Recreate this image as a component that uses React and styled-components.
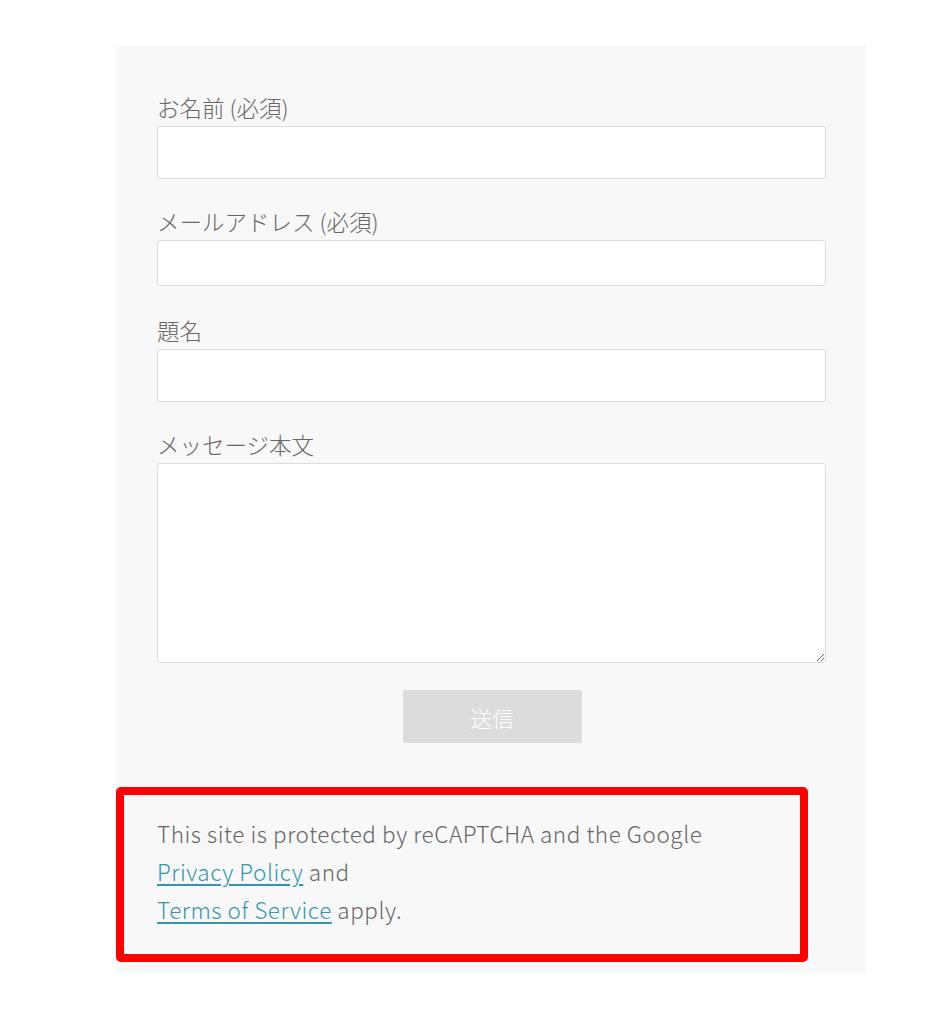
import React from "react";
import styled, { createGlobalStyle } from "styled-components";

const GlobalStyle = createGlobalStyle`
  body {
    margin: 0;
    background: #fff;
    font-family: "Noto Sans CJK JP", "Noto Sans", sans-serif;
  }
`;

const Page = styled.div`
  padding: 46px 0 40px 116px;
`;

const Panel = styled.div`
  width: 750px;
  background: #f8f8f8;
  padding: 46px 0 11px 0;
  box-sizing: border-box;
`;

const Form = styled.form`
  padding: 0 40px 0 41px;
  display: flex;
  flex-direction: column;
`;

const Field = styled.div`
  display: flex;
  flex-direction: column;
  margin-bottom: ${({ $mb }) => $mb || 27}px;
`;

const Label = styled.label`
  font-size: 22.5px;
  font-weight: 300;
  line-height: 30px;
  color: #666;
  margin-bottom: 4px;
`;

const Input = styled.input`
  height: ${({ $h }) => $h}px;
  box-sizing: border-box;
  border: 1px solid #dcdcdc;
  border-radius: 3px;
  background: #fff;
  font: inherit;
  outline: none;
`;

const TextArea = styled.textarea`
  height: 200px;
  box-sizing: border-box;
  border: 1px solid #dcdcdc;
  border-radius: 3px;
  background: #fff;
  font: inherit;
  outline: none;
  resize: vertical;
`;

const Submit = styled.button`
  align-self: center;
  width: 179px;
  height: 53px;
  border: none;
  border-radius: 2px;
  background: #dcdcdc;
  color: #fff;
  font-family: inherit;
  font-size: 22px;
  font-weight: 300;
  margin-left: 1px;
`;

const Notice = styled.div`
  margin-top: 44px;
  width: 692px;
  box-sizing: border-box;
  border: 8px solid #ff0000;
  border-radius: 5px;
  padding: 19px 20px 26px 33px;
  font-size: 22.5px;
  font-weight: 300;
  line-height: 38px;
  letter-spacing: 0.55px;
  color: #666;
`;

const Link = styled.a`
  color: #3496ad;
  text-decoration: underline;
  text-underline-offset: 3px;
`;

const App = () => {
  return (
    <Page>
      <GlobalStyle />
      <Panel>
        <Form onSubmit={(e) => e.preventDefault()}>
          <Field>
            <Label>お名前 (必須)</Label>
            <Input $h={53} />
          </Field>
          <Field $mb={29}>
            <Label>メールアドレス (必須)</Label>
            <Input $h={46} />
          </Field>
          <Field>
            <Label>題名</Label>
            <Input $h={53} />
          </Field>
          <Field>
            <Label>メッセージ本文</Label>
            <TextArea />
          </Field>
          <Submit disabled>送信</Submit>
        </Form>
        <Notice>
          This site is protected by reCAPTCHA and the Google
          <br />
          <Link href="#">Privacy Policy</Link> and
          <br />
          <Link href="#">Terms of Service</Link> apply.
        </Notice>
      </Panel>
    </Page>
  );
};

export default App;
